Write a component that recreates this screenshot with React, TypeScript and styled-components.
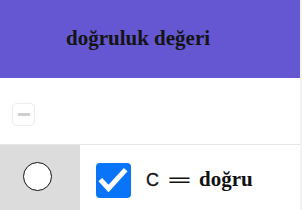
import React from 'react';
import styled, {createGlobalStyle} from 'styled-components';

const GlobalStyle = createGlobalStyle`
	html, body {
		margin: 0;
		padding: 0;
		background: #ffffff;
	}
`;

const Frame = styled.div`
	width: 302px;
	height: 210px;
	box-sizing: border-box;
	border-right: 2px solid #f3f3f3;
	overflow: hidden;
	display: flex;
	flex-direction: column;
`;

const Header = styled.div`
	height: 78px;
	flex-shrink: 0;
	background: #6557d2;
	display: flex;
	align-items: center;
	padding-left: 66px;
	padding-bottom: 2px;
	box-sizing: border-box;
	font-family: 'Liberation Serif', 'Times New Roman', serif;
	font-weight: bold;
	font-size: 21px;
	color: #141414;
`;

const Toolbar = styled.div`
	height: 67px;
	flex-shrink: 0;
	box-sizing: border-box;
	border-bottom: 1px solid #e6e6e6;
	padding: 25px 0 0 12px;
`;

const MinusButton = styled.button`
	width: 23px;
	height: 23px;
	padding: 0;
	border: 1px solid #ececec;
	border-radius: 5px;
	background: #ffffff;
	display: flex;
	align-items: center;
	justify-content: center;
	cursor: pointer;

	&::before {
		content: '';
		width: 12px;
		height: 3px;
		border-radius: 1px;
		background: #cfcfcf;
	}
`;

const Row = styled.div`
	flex: 1;
	display: grid;
	grid-template-columns: 80px 1fr;
`;

const MarkerCell = styled.div`
	background: #dcdcdc;
	padding: 17px 0 0 23px;
`;

const Circle = styled.div`
	width: 29px;
	height: 29px;
	box-sizing: border-box;
	border-radius: 50%;
	border: 1.6px solid #111111;
	background: #ffffff;
`;

const ValueCell = styled.div`
	display: flex;
	align-items: flex-start;
	padding: 18px 0 0 16px;
`;

const CheckBox = styled.span`
	width: 35px;
	height: 35px;
	flex-shrink: 0;
	border-radius: 4px;
	background: #0a74f8;
	display: flex;
`;

const Expression = styled.div`
	display: flex;
	align-items: baseline;
	margin-left: 15px;
	margin-top: 4px;
	color: #111111;
`;

const Symbol = styled.span`
	font-family: 'Liberation Sans', Arial, sans-serif;
	font-size: 18px;
	font-weight: 500;
	-webkit-text-stroke: 0.3px #111111;
`;

const Equals = styled.span`
	display: inline-block;
	margin: 0 12px 0 7px;
	font-family: 'DejaVu Sans', sans-serif;
	font-size: 20px;
	transform: scaleX(1.6);
	transform-origin: left center;
	width: 21px;
`;

const Value = styled.span`
	font-family: 'Liberation Serif', 'Times New Roman', serif;
	font-weight: bold;
	font-size: 21px;
`;

const Check = () => (
	<svg width="35" height="35" viewBox="0 0 35 35">
		<path d="M6 18.5 L12.5 25.5 L28 8.5" fill="none" stroke="#ffffff" strokeWidth="5" strokeLinecap="square" />
	</svg>
);

const App = () => {
	return (
		<Frame>
			<GlobalStyle />
			<Header>doğruluk değeri</Header>
			<Toolbar>
				<MinusButton aria-label="remove" />
			</Toolbar>
			<Row>
				<MarkerCell>
					<Circle />
				</MarkerCell>
				<ValueCell>
					<CheckBox>
						<Check />
					</CheckBox>
					<Expression>
						<Symbol>C</Symbol>
						<Equals>=</Equals>
						<Value>doğru</Value>
					</Expression>
				</ValueCell>
			</Row>
		</Frame>
	);
};

export default App;
